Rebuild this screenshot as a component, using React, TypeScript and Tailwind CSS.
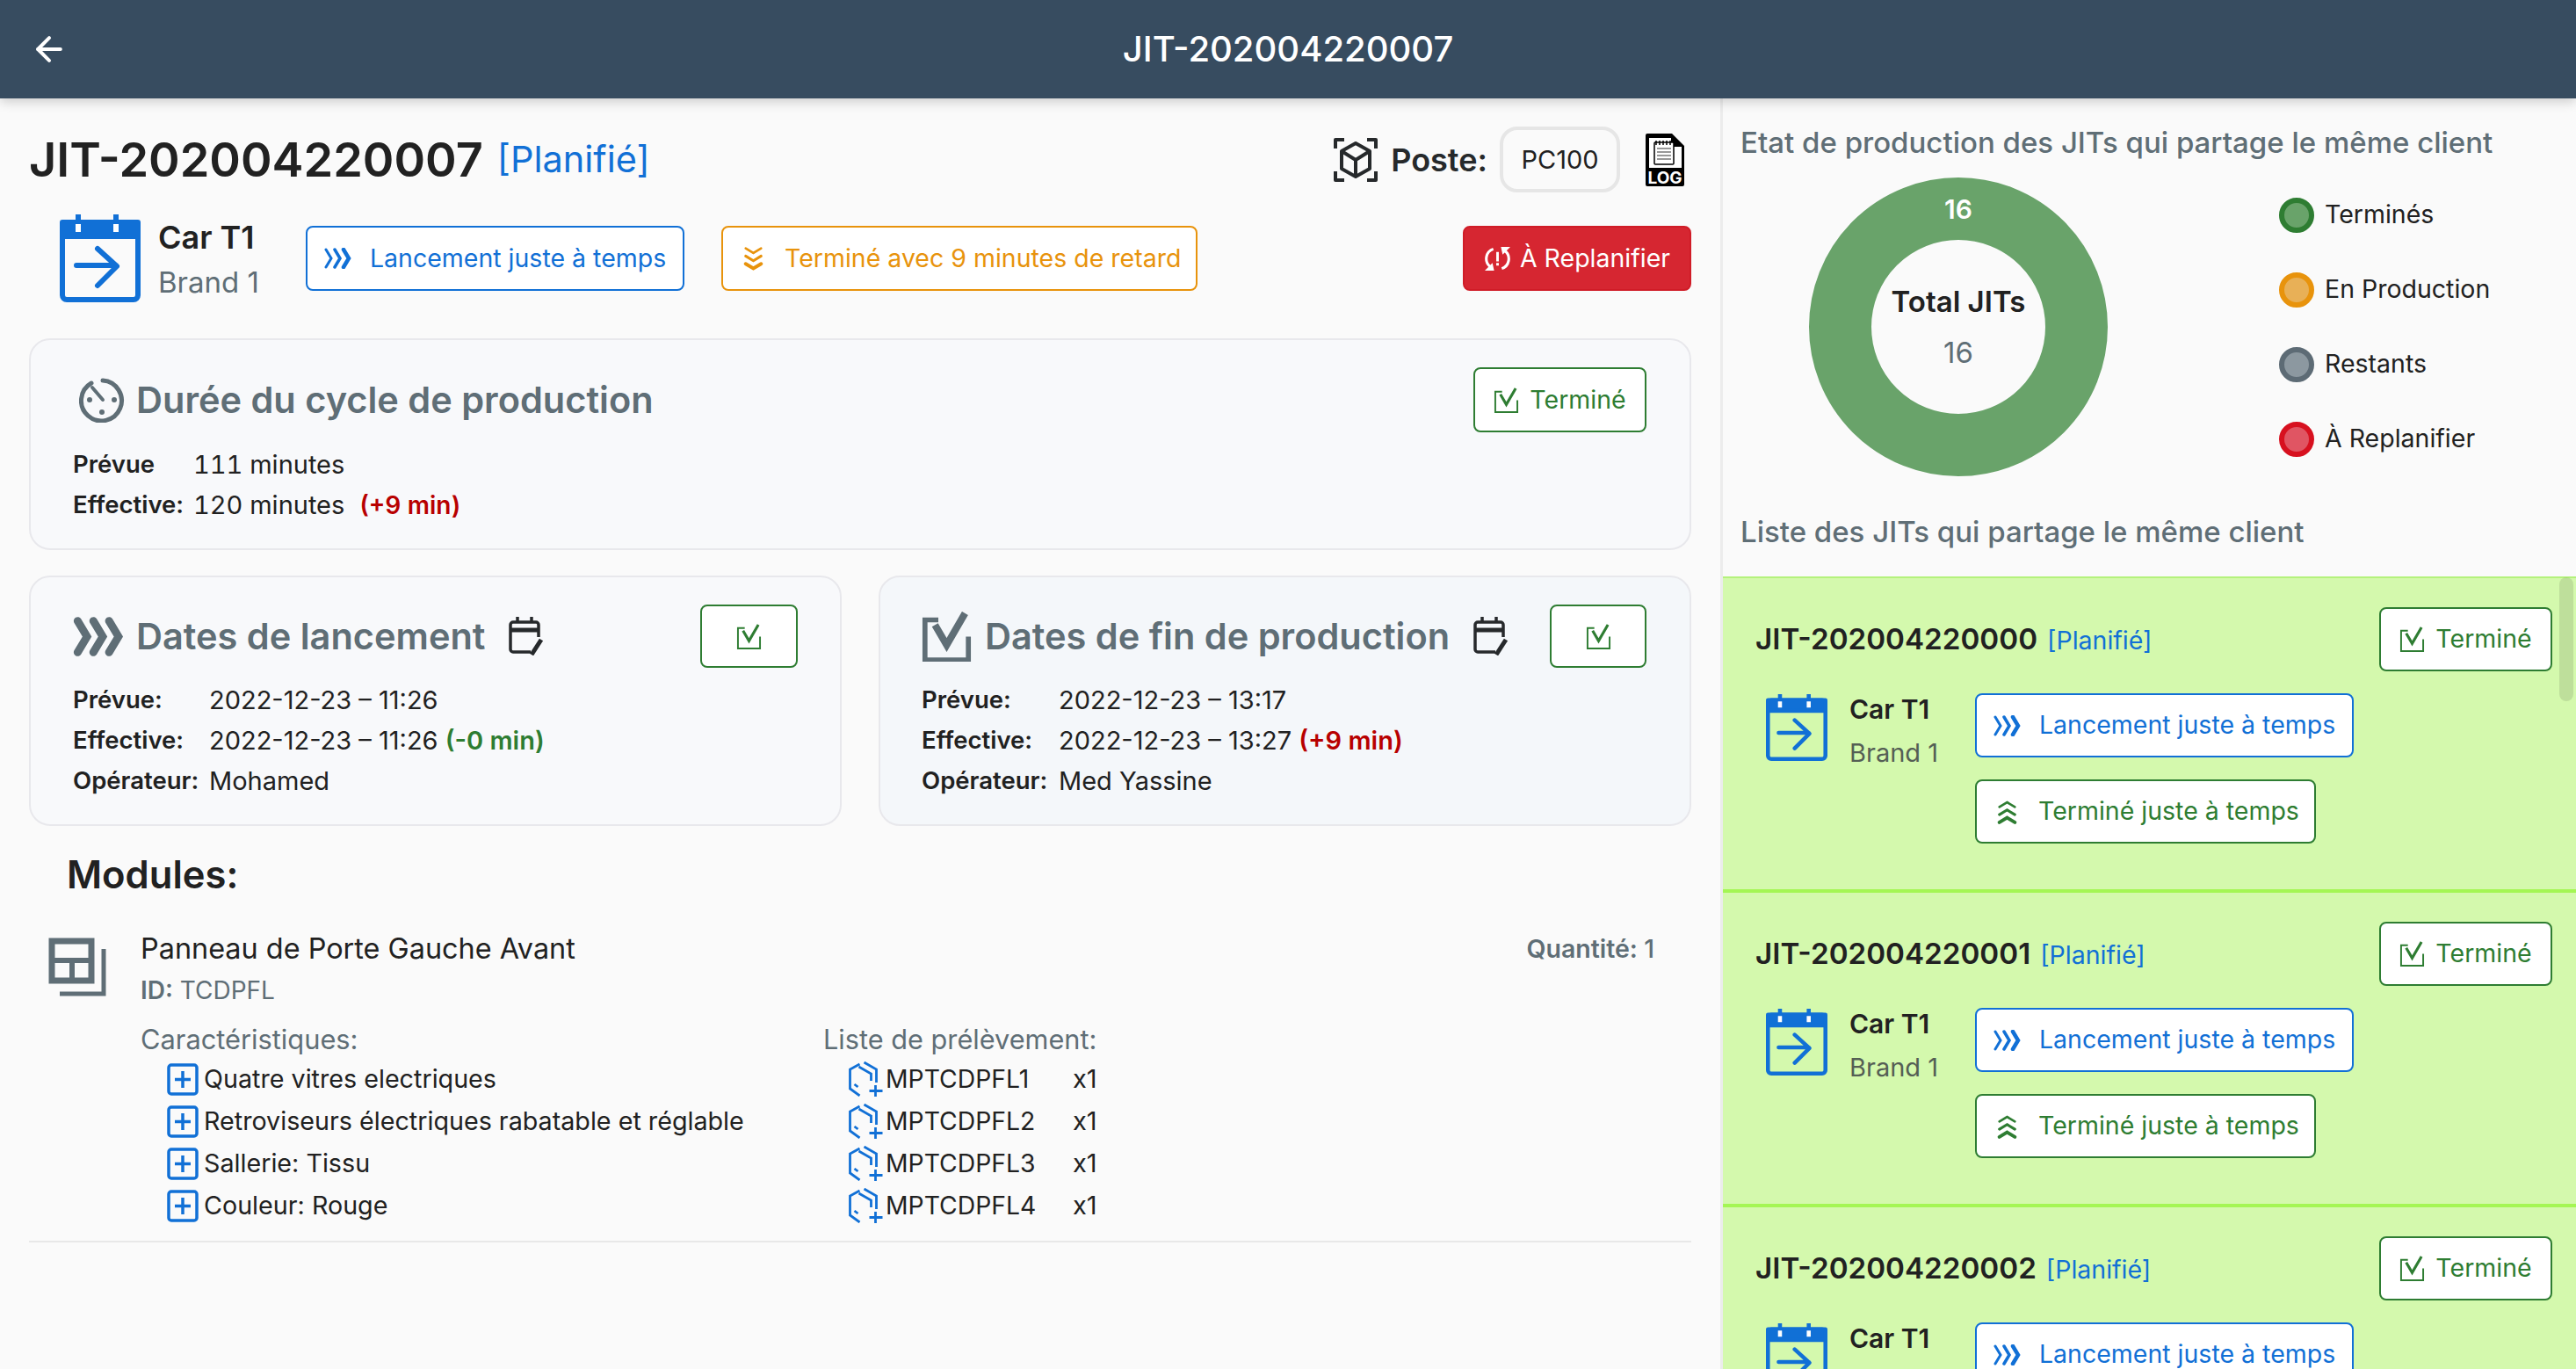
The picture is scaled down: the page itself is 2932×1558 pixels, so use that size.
/**
 * JIT detail page - production status of one JIT and the JITs sharing its client
 */

import React from 'react';
import { ArrowLeft } from 'lucide-react';

const BLUE = '#1170d6';
const GREEN = '#2e7d32';
const ORANGE = '#e8930c';

const CalendarArrowIcon: React.FC<{ className?: string }> = ({ className }) => (
  <svg viewBox="0 0 92 100" className={className} fill="none">
    <rect x="3" y="9" width="86" height="88" rx="5" stroke={BLUE} strokeWidth="6" />
    <path d="M3 9h86v16H3z" fill={BLUE} stroke={BLUE} strokeWidth="6" strokeLinejoin="round" />
    <path d="M21 0v20M64 0v20" stroke={BLUE} strokeWidth="6" />
    <path d="M21 11v9M64 11v9" stroke="#ffffff" strokeWidth="6" />
    <path d="M19 58h45M43 39l22 20-22 22" stroke={BLUE} strokeWidth="6" strokeLinecap="round" strokeLinejoin="round" />
  </svg>
);

// Three chevrons pointing right, rotated by the caller for up and down
const ChevronsIcon: React.FC<{ className?: string; color: string; widths?: number[] }> = ({
  className,
  color,
  widths = [3, 3.5, 4.5]
}) => (
  <svg viewBox="0 0 33 24" className={className} fill="none" stroke={color} strokeLinecap="round" strokeLinejoin="miter">
    <path d="M3 2l6 10-6 10" strokeWidth={widths[0]} />
    <path d="M13 2l6 10-6 10" strokeWidth={widths[1]} />
    <path d="M23 2l6 10-6 10" strokeWidth={widths[2]} />
  </svg>
);

const CheckSquareIcon: React.FC<{ className?: string; color: string; strokeWidth?: number }> = ({
  className,
  color,
  strokeWidth = 2
}) => (
  <svg viewBox="0 0 30 30" className={className} fill="none" stroke={color}>
    <path d="M10 5H2v24h26V15" strokeWidth={strokeWidth} />
    <path d="M8 8l7 12 11-19" strokeWidth={strokeWidth + 1.2} />
  </svg>
);

const CycleIcon: React.FC<{ className?: string }> = ({ className }) => (
  <svg viewBox="0 0 52 52" className={className} fill="none">
    <path d="M27 4a23 23 0 1 1-13 3" stroke="#5f6e76" strokeWidth="5" strokeLinecap="round" />
    <path d="M15 12l12 14" stroke="#5f6e76" strokeWidth="4" strokeLinecap="round" />
    <circle cx="40" cy="26" r="3" fill="#5f6e76" />
    <circle cx="12" cy="26" r="3" fill="#5f6e76" />
    <circle cx="26" cy="40" r="3" fill="#5f6e76" />
  </svg>
);

const CalendarEditIcon: React.FC<{ className?: string }> = ({ className }) => (
  <svg viewBox="0 0 42 44" className={className} fill="none" stroke="#26292b">
    <path d="M26 40H6a3 3 0 0 1-3-3V9a3 3 0 0 1 3-3h26a3 3 0 0 1 3 3v14" strokeWidth="3.5" />
    <path d="M3 15h32" strokeWidth="5" />
    <path d="M11 0v6M27 0v6" strokeWidth="3.5" />
    <path d="M27 43l11-17" strokeWidth="5" />
  </svg>
);

const CubeScanIcon: React.FC<{ className?: string }> = ({ className }) => (
  <svg viewBox="0 0 50 50" className={className} fill="none" stroke="#26292b" strokeWidth="4">
    <path d="M12 2H2v10M38 2h10v10M2 38v10h10M48 38v10H38" strokeLinejoin="round" />
    <path d="M25 6l16 9v20l-16 9-16-9V15zM9 15l16 10 16-10M25 25v19" strokeLinejoin="round" />
  </svg>
);

const LogFileIcon: React.FC<{ className?: string }> = ({ className }) => (
  <svg viewBox="0 0 44 60" className={className}>
    <path d="M2 0h28l14 14v44a2 2 0 0 1-2 2H2a2 2 0 0 1-2-2V2a2 2 0 0 1 2-2z" fill="#000000" />
    <path d="M41 15v24H4V5h25v10z" fill="#ffffff" />
    <rect x="10" y="10" width="22" height="25" rx="1" fill="#ffffff" stroke="#000000" strokeWidth="1.5" />
    <path d="M13 17h16M13 21h16M13 25h16M13 29h16" stroke="#777777" strokeWidth="1.5" />
    <path d="M12 8v5M16 8v5M20 8v5M24 8v5M28 8v5" stroke="#000000" strokeWidth="1.5" />
    <text x="22" y="56.500" textAnchor="middle" fill="#ffffff" fontSize="19" fontWeight="700" fontFamily="Inter, sans-serif">LOG</text>
  </svg>
);

const ReplanIcon: React.FC<{ className?: string }> = ({ className }) => (
  <svg viewBox="0 0 32 30" className={className} fill="none" stroke="#ffffff">
    <path d="M11 3.500A12 12 0 0 0 7 24" strokeWidth="3.2" />
    <path d="M21 26.500A12 12 0 0 0 25 6" strokeWidth="3.2" />
    <path d="M1 29h11l-2-9zM31 1H20l2 9z" fill="#ffffff" stroke="none" />
    <path d="M16 7v11M16 20v3" strokeWidth="3" />
  </svg>
);

const ModuleIcon: React.FC<{ className?: string }> = ({ className }) => (
  <svg viewBox="0 0 66 67" className={className} fill="none" stroke="#5f6e76">
    <path d="M4 4h45v45H4z" strokeWidth="7" />
    <path d="M4 26h45M27 26v23" strokeWidth="6" />
    <path d="M63 13v51H13" strokeWidth="5" />
  </svg>
);

const PlusSquareIcon: React.FC<{ className?: string }> = ({ className }) => (
  <svg viewBox="0 0 36 37" className={className} fill="none" stroke={BLUE}>
    <rect x="2" y="2" width="32" height="33" rx="3" strokeWidth="3.5" />
    <path d="M18 9v19M9 18.500h18" strokeWidth="3.5" />
  </svg>
);

const PartIcon: React.FC<{ className?: string }> = ({ className }) => (
  <svg viewBox="0 0 40 40" className={className} fill="none" stroke={BLUE} strokeWidth="2.800">
    <path d="M14 3L3 9v22l11 8" />
    <path d="M19 1l14 8v15" />
    <path d="M13 6l14 8v8" />
    <path d="M8 26l4 3" />
    <path d="M32 27v13M25 33.500h15" />
  </svg>
);

const LEGEND = [
  { label: 'Terminés', dot: 'border-[#2e7d32] bg-[#69a36a]' },
  { label: 'En Production', dot: 'border-[#e8930c] bg-[#e8b057]' },
  { label: 'Restants', dot: 'border-[#5d6b75] bg-[#8c98a0]' },
  { label: 'À Replanifier', dot: 'border-[#d7101f] bg-[#e05563]' }
];

const FEATURES = [
  'Quatre vitres electriques',
  'Retroviseurs électriques rabatable et réglable',
  'Sallerie: Tissu',
  'Couleur: Rouge'
];

const PICK_LIST = ['MPTCDPFL1', 'MPTCDPFL2', 'MPTCDPFL3', 'MPTCDPFL4'];

const SIBLING_JITS = ['JIT-202004220000', 'JIT-202004220001', 'JIT-202004220002'];

const LaunchBadge: React.FC<{ className?: string }> = ({ className }) => (
  <div className={`flex w-[431px] items-center rounded-[8px] border-2 border-[#1170d6] bg-white pl-[18px] text-[28.500px] text-[#1170d6] ${className ?? ''}`}>
    <ChevronsIcon color={BLUE} className="h-[24px] w-[33px]" />
    <span className="ml-[20px]">Lancement juste à temps</span>
  </div>
);

const TerminatedButton: React.FC<{ className?: string }> = ({ className }) => (
  <div className={`flex w-[197px] shrink-0 items-center justify-center gap-[12px] rounded-[8px] border-2 border-[#2e7d32] bg-white text-[28.500px] text-[#2e7d32] ${className ?? ''}`}>
    <CheckSquareIcon color={GREEN} className="h-[29px] w-[29px]" />
    Terminé
  </div>
);

const CheckButton: React.FC<{ className?: string }> = ({ className }) => (
  <div className={`flex h-[72px] shrink-0 items-center justify-center rounded-[8px] border-2 border-[#2e7d32] bg-white ${className ?? ''}`}>
    <CheckSquareIcon color={GREEN} className="h-[29px] w-[29px]" />
  </div>
);

const InfoRow: React.FC<{ label: string; children: React.ReactNode; labelClass: string; valueClass?: string }> = ({
  label,
  children,
  labelClass,
  valueClass
}) => (
  <div className="flex h-[46px] items-center text-[29px] text-[#212121]">
    <span className={`text-[27.500px] font-semibold ${labelClass}`}>{label}</span>
    <span className={valueClass}>{children}</span>
  </div>
);

const SiblingItem: React.FC<{ name: string }> = ({ name }) => (
  <div className="h-[358px] shrink-0 border-b-4 border-[#a4f654] pl-[37px] pr-[27px] pt-[33px]">
    <div className="flex items-center justify-between">
      <div className="flex items-baseline gap-[11px]">
        <span className="text-[33.200px] font-semibold text-[#212121]">{name}</span>
        <span className="text-[28.500px] text-[#1170d6]">[Planifié]</span>
      </div>
      <TerminatedButton className="h-[73px]" />
    </div>
    <div className="mt-[24px] flex pl-[12px]">
      <CalendarArrowIcon className="h-[80px] w-[70px] shrink-0" />
      <div className="ml-[25px] w-[143px] shrink-0">
        <div className="flex h-[38px] items-center text-[30px] font-semibold text-[#212121]">Car T1</div>
        <div className="mt-[12px] flex h-[38px] items-center text-[29px] text-[#555f55]">Brand 1</div>
      </div>
      <div className="flex flex-col items-start gap-[25px] pt-px">
        <LaunchBadge className="h-[73px]" />
        <div className="flex h-[73px] w-[388px] items-center rounded-[8px] border-2 border-[#2e7d32] bg-white pl-[20px] text-[28.500px] text-[#2e7d32]">
          <ChevronsIcon color={GREEN} widths={[4.5, 3.5, 3]} className="h-[24px] w-[29px] -rotate-90" />
          <span className="ml-[21px]">Terminé juste à temps</span>
        </div>
      </div>
    </div>
  </div>
);

export default function App() {
  return (
    <div className="flex h-screen flex-col overflow-hidden bg-[#fafafa] font-[Inter,sans-serif] text-[#212121]">
      {/* Header */}
      <header className="relative z-10 flex h-[112px] shrink-0 items-center bg-[#374c60] shadow-[0_4px_12px_rgba(0,0,0,0.18)]">
        <ArrowLeft className="absolute left-[34px] h-[44px] w-[44px] text-white" strokeWidth={2.2} />
        <h1 className="w-full text-center text-[40px] font-medium text-white">JIT-202004220007</h1>
      </header>

      <div className="flex min-h-0 flex-1">
        {/* Left column */}
        <main className="w-[1958px] shrink-0 pl-[33px] pr-[33px] pt-[32px]">
          <div className="flex h-[75px] items-center">
            <span className="text-[54px] font-semibold leading-none">JIT-202004220007</span>
            <span className="ml-[16px] text-[41.500px] leading-none text-[#1170d6]">[Planifié]</span>
            <div className="ml-auto flex items-center pr-[8px]">
              <CubeScanIcon className="h-[50px] w-[50px]" />
              <span className="ml-[15px] text-[36px] font-semibold text-[#26292b]">Poste:</span>
              <div className="ml-[14px] flex h-[75px] w-[137px] items-center justify-center rounded-[20px] border-4 border-[#e6e6e6] text-[29px]">PC100</div>
              <LogFileIcon className="ml-[29px] h-[60px] w-[44px]" />
            </div>
          </div>

          <div className="mt-[25px] flex h-[100px] items-center pl-[35px]">
            <CalendarArrowIcon className="h-[100px] w-[92px] shrink-0" />
            <div className="ml-[20px] w-[168px] self-start pt-[4px]">
              <div className="flex h-[44px] items-center text-[36px] font-semibold">Car T1</div>
              <div className="mt-[8px] flex h-[44px] items-center text-[33px] text-[#5f6e76]">Brand 1</div>
            </div>
            <LaunchBadge className="h-[74px]" />
            <div className="ml-[42px] flex h-[74px] w-[542px] items-center rounded-[8px] border-2 border-[#e8930c] bg-white pl-[20px] text-[28.500px] text-[#e8930c]">
              <ChevronsIcon color={ORANGE} className="h-[23px] w-[29px] rotate-90" />
              <span className="ml-[21px]">Terminé avec 9 minutes de retard</span>
            </div>
            <div className="ml-auto flex h-[74px] w-[260px] items-center justify-center gap-[10px] rounded-[8px] border-2 border-[#d01c27] bg-[#d62631] text-[28.500px] text-white">
              <ReplanIcon className="h-[29px] w-[31px]" />
              À Replanifier
            </div>
          </div>

          {/* Cycle duration */}
          <section className="mt-[41px] h-[241px] rounded-[24px] border-2 border-[#e8e8ec] bg-[#f8f9fb] pl-[48px] pr-[49px] pt-[31px]">
            <div className="flex h-[74px] items-center justify-between">
              <div className="flex items-center">
                <CycleIcon className="ml-[7px] h-[52px] w-[52px]" />
                <span className="ml-[13px] text-[41.500px] font-semibold text-[#5f6e76]">Durée du cycle de production</span>
              </div>
              <TerminatedButton className="h-[74px]" />
            </div>
            <div className="mt-[14px]">
              <InfoRow label="Prévue" labelClass="w-[137px]" valueClass="tabular-nums">111 minutes</InfoRow>
              <InfoRow label="Effective:" labelClass="w-[137px]" valueClass="tabular-nums">
                120 minutes <span className="ml-[9px] text-[28px] font-semibold text-[#b80000]">(+9 min)</span>
              </InfoRow>
            </div>
          </section>

          {/* Launch and end dates */}
          <div className="mt-[29px] flex gap-[42px]">
            <section className="h-[285px] w-[925px] rounded-[24px] border-2 border-[#e8e8ec] bg-[#f8f9fb] pl-[48px] pr-[48px] pt-[31px]">
              <div className="flex h-[72px] items-center">
                <ChevronsIcon color="#5f6e76" widths={[5, 5, 5]} className="h-[47px] w-[59px]" />
                <span className="ml-[13px] text-[41.500px] font-semibold text-[#5f6e76]">Dates de lancement</span>
                <CalendarEditIcon className="ml-[26px] h-[44px] w-[42px]" />
                <CheckButton className="ml-auto w-[111px]" />
              </div>
              <div className="mt-[14px]">
                <InfoRow label="Prévue:" labelClass="w-[155px]">2022-12-23 – 11:26</InfoRow>
                <InfoRow label="Effective:" labelClass="w-[155px]">
                  2022-12-23 – 11:26 <span className="font-semibold text-[#2e7d32]">(-0 min)</span>
                </InfoRow>
                <InfoRow label="Opérateur:" labelClass="w-[155px]">Mohamed</InfoRow>
              </div>
            </section>
            <section className="h-[285px] w-[925px] rounded-[24px] border-2 border-[#e8e8ec] bg-[#f4f7fa] pl-[47px] pr-[49px] pt-[31px]">
              <div className="flex h-[72px] items-center">
                <CheckSquareIcon color="#5f6e76" strokeWidth={3} className="h-[57px] w-[57px]" />
                <span className="ml-[15px] text-[41.500px] font-semibold text-[#5f6e76]">Dates de fin de production</span>
                <CalendarEditIcon className="ml-[26px] h-[44px] w-[42px]" />
                <CheckButton className="ml-auto w-[110px]" />
              </div>
              <div className="mt-[14px]">
                <InfoRow label="Prévue:" labelClass="w-[156px]">2022-12-23 – 13:17</InfoRow>
                <InfoRow label="Effective:" labelClass="w-[156px]">
                  2022-12-23 – 13:27 <span className="font-semibold text-[#b80000]">(+9 min)</span>
                </InfoRow>
                <InfoRow label="Opérateur:" labelClass="w-[156px]">Med Yassine</InfoRow>
              </div>
            </section>
          </div>

          {/* Modules */}
          <h2 className="mt-[32px] flex h-[48px] items-center pl-[43px] text-[43.500px] font-semibold">Modules:</h2>
          <div className="mt-[40px] flex border-b-2 border-[#e8e8e8] pb-[16px] pl-[22px] pr-[42px]">
            <div className="w-[105px] shrink-0 pt-[7px]">
              <ModuleIcon className="h-[67px] w-[66px]" />
            </div>
            <div className="flex-1">
              <div className="flex h-[40px] items-center justify-between">
                <span className="text-[32.400px]">Panneau de Porte Gauche Avant</span>
                <span className="text-[28.500px] font-semibold text-[#5f6e76]">
                  Quantité: <span className="font-medium">1</span>
                </span>
              </div>
              <div className="mt-[9px] flex h-[36px] items-center text-[28px] text-[#5f6e76]">
                <span className="font-semibold">ID:</span>&nbsp;TCDPFL
              </div>
              <div className="mt-[20px] flex">
                <div className="w-[777px] shrink-0">
                  <div className="flex h-[36px] items-center text-[30.800px] text-[#5f6e76]">Caractéristiques:</div>
                  <div className="mt-[3px]">
                    {FEATURES.map((feature) => (
                      <div key={feature} className="flex h-[48px] items-center gap-[6px] pl-[30px] text-[28.700px]">
                        <PlusSquareIcon className="h-[37px] w-[36px]" />
                        {feature}
                      </div>
                    ))}
                  </div>
                </div>
                <div>
                  <div className="flex h-[36px] items-center text-[30.700px] text-[#5f6e76]">Liste de prélèvement:</div>
                  <div className="mt-[3px]">
                    {PICK_LIST.map((code) => (
                      <div key={code} className="flex h-[48px] items-center pl-[27px] text-[28.300px]">
                        <PartIcon className="h-[40px] w-[41px]" />
                        <span className="ml-[3px] w-[213px]">{code}</span>
                        <span className="text-[29px]">x1</span>
                      </div>
                    ))}
                  </div>
                </div>
              </div>
            </div>
          </div>
        </main>

        {/* Right column */}
        <aside className="relative flex min-w-0 flex-1 flex-col border-l-[3px] border-[#ececec]">
          <h3 className="ml-[20px] mt-[29px] flex h-[44px] items-center text-[33px] font-medium text-[#5f6e76]">
            Etat de production des JITs qui partage le même client
          </h3>
          <div className="ml-[98px] mt-[17px] flex">
            <div className="relative h-[340px] w-[340px] shrink-0">
              <svg viewBox="0 0 340 340" className="h-full w-full" fill="none">
                <circle cx="170" cy="170" r="134.500" stroke="#69a36a" strokeWidth="71" />
              </svg>
              <span className="absolute left-0 top-[18px] w-full text-center text-[30px] font-semibold leading-[36px] text-white">16</span>
              <span className="absolute left-0 top-[121px] w-full text-center text-[33px] font-semibold leading-[40px]">Total JITs</span>
              <span className="absolute left-0 top-[179px] w-full text-center text-[33px] leading-[40px] text-[#5f6e76]">16</span>
            </div>
            <div className="ml-[195px]">
              {LEGEND.map((item) => (
                <div key={item.label} className="flex h-[85px] items-center gap-[12px] text-[28.500px]">
                  <span className={`h-[40px] w-[40px] rounded-full border-[6px] ${item.dot}`} />
                  {item.label}
                </div>
              ))}
            </div>
          </div>
          <h3 className="ml-[20px] mt-[42px] flex h-[44px] items-center text-[33px] font-medium text-[#5f6e76]">
            Liste des JITs qui partage le même client
          </h3>
          <div className="mt-[28px] flex min-h-0 flex-1 flex-col overflow-hidden border-t-2 border-[#b4f27c] bg-[#d4f9ad]">
            {SIBLING_JITS.map((name) => (
              <SiblingItem key={name} name={name} />
            ))}
          </div>
          {/* Overlay scrollbar */}
          <div className="absolute right-[3px] top-[545px] h-[141px] w-[16px] rounded-full bg-[rgba(0,0,0,0.1)]" />
        </aside>
      </div>
    </div>
  );
}
